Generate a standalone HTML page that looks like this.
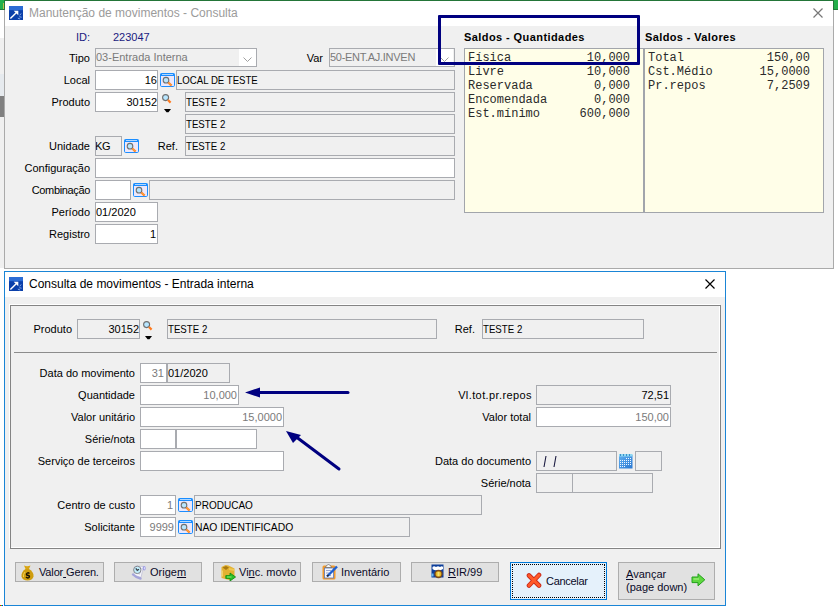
<!DOCTYPE html>
<html><head><meta charset="utf-8">
<style>
*{margin:0;padding:0;box-sizing:border-box}
html,body{width:838px;height:606px;overflow:hidden;background:#fff}
body{position:relative;font-family:"Liberation Sans",sans-serif;font-size:11px;color:#000}
.a{position:absolute}
.win{position:absolute;border:1px solid #aaa;background:#f0f0f0}
.tb{position:absolute;left:0;right:0;top:0;background:#fff}
.tt{position:absolute;font-size:12px;white-space:nowrap;line-height:16px}
.lb{position:absolute;white-space:nowrap;line-height:20px;height:20px;text-align:right}
.f{position:absolute;border:1px solid #a9abb0;background:#fff;height:20px;line-height:19px;white-space:nowrap;overflow:hidden;padding:0}
.d{background:#f0f0f0}
.rt{text-align:right;padding:0}
.g{color:#7a7a7a}
.mono{font-family:"Liberation Mono",monospace;font-size:12px;line-height:14px;white-space:pre;position:absolute;color:#2a2a2a}
.bold{font-weight:bold}
.uc{letter-spacing:-0.5px}
.lk{position:absolute;width:15px;height:15px}
.btn{position:absolute;border:1px solid #adadad;background:#e1e1e1;height:20px;line-height:18px;white-space:nowrap}
</style></head>
<body>
<svg width="0" height="0" style="position:absolute">
<defs>
<symbol id="lk" viewBox="0 0 15 14">
 <rect x="0.5" y="0.5" width="14" height="13" rx="1.2" fill="#ece8fb" stroke="#1b8dff"/>
 <rect x="0.5" y="0.5" width="14" height="2.5" fill="#1b8dff"/>
 <rect x="2" y="1" width="11" height="1" fill="#b0d8ff"/>
 <circle cx="6" cy="7.2" r="2.8" fill="#b8e6ff" stroke="#707070" stroke-width="1.1"/>
 <path d="M8.3 9.5 L11.6 12.6" stroke="#ff8326" stroke-width="2.2"/>
 <path d="M9.3 10.5 L10.3 11.5" stroke="#ffd040" stroke-width="1"/>
</symbol>
<symbol id="app" viewBox="0 0 15 15">
 <rect x="0" y="0" width="15" height="15" fill="#0b40aa"/>
 <rect x="0" y="0" width="15" height="4.5" fill="#2c6cd4"/>
 <path d="M1.5 13.5 L8.5 6.5" stroke="#fff" stroke-width="1.5"/>
 <path d="M5 5 L10 5 L10 10 Z" fill="#fff"/>
 <path d="M13 8 L11.5 10 M11 11.5 L13.5 12 M9.5 13 L12 14" stroke="#8fb0ea" stroke-width="1"/>
</symbol>
<symbol id="mg" viewBox="0 0 10 10">
 <circle cx="3.6" cy="3.6" r="3" fill="#b8e6ff" stroke="#6f6f6f" stroke-width="1.1"/>
 <path d="M6 6 L8.6 8.6" stroke="#ff7a1e" stroke-width="2.2"/>
</symbol>
</defs></svg>
<!-- background bits -->
<div class="a" style="left:0;top:0;width:838px;height:1px;background:#2a7a3c"></div>
<div class="a" style="left:0;top:0;width:4px;height:10px;background:#22b04b"></div>

<div class="a" style="left:0;top:38px;width:4px;height:230px;background:#f0f0f0"></div>
<div class="a" style="left:0;top:74px;width:4px;height:22px;background:#e6eaee"></div>
<div class="a" style="left:0;top:96px;width:4px;height:21px;background:#808080"></div>

<div class="a" style="left:0;top:605px;width:1px;height:1px;background:#f00"></div><div class="a" style="left:1px;top:605px;width:1px;height:1px;background:#0f0"></div><div class="a" style="left:2px;top:605px;width:1px;height:1px;background:#00f"></div>
<!-- TOP WINDOW -->
<div class="win" style="left:4px;top:0px;width:830px;height:269px;border-top-color:#237538">
  <div class="tb" style="height:25px"></div>
</div>
<div class="a" style="left:834px;top:0;width:4px;height:9px;background:#22ae4a"></div><div class="a" style="left:4px;top:0;width:1px;height:10px;background:#23753a"></div><div class="a" style="left:0;top:9px;width:4px;height:1px;background:#1f7a38"></div><div class="a" style="left:3px;top:3px;width:1px;height:6px;background:#b9c24a"></div><div class="a" style="left:834px;top:9px;width:4px;height:1px;background:#1f7a38"></div><div class="a" style="left:833px;top:0;width:1px;height:10px;background:#23753a"></div>
<svg class="a" style="left:9px;top:6px" width="14" height="14" viewBox="0 0 15 15"><use href="#app"/></svg>
<div class="tt" style="left:29px;top:5px;color:#9b9b9b">Manutenção de movimentos - Consulta</div>
<svg class="a" style="left:813px;top:8px" width="11" height="11" viewBox="0 0 11 11"><path d="M0.5 0.5 L9.5 9.5 M9.5 0.5 L0.5 9.5" stroke="#777" stroke-width="1.2"/></svg>

<div class="lb" style="left:76px;top:27px;color:#1a1a80;text-align:left">ID:</div>
<div class="lb" style="left:113px;top:27px;color:#1a1a80;text-align:left">223047</div>

<div class="lb" style="right:748px;top:48px">Tipo</div>
<div class="f d g" style="left:95px;top:48px;width:162px;height:19px;line-height:17px">03-Entrada Interna</div>
<div class="a" style="left:239px;top:49px;width:17px;height:17px;background:#fff"></div>
<svg class="a" style="left:243px;top:57px" width="9" height="5"><path d="M0.5 0.5 L4.5 4.5 L8.5 0.5" stroke="#a0a0a0" fill="none"/></svg>

<div class="lb" style="right:515px;top:48px">Var</div>
<div class="f d g" style="left:329px;top:48px;width:126px;height:19px;line-height:17px"><span style="letter-spacing:-0.28px">50-ENT.AJ.INVEN</span></div>
<div class="a" style="left:436px;top:49px;width:17px;height:17px;background:#fff"></div>
<svg class="a" style="left:440px;top:57px" width="9" height="5"><path d="M0.5 0.5 L4.5 4.5 L8.5 0.5" stroke="#a0a0a0" fill="none"/></svg>

<div class="lb" style="right:748px;top:70px">Local</div>
<div class="f rt" style="left:95px;top:70px;width:63px">16</div>
<div class="f d" style="left:176px;top:70px;width:279px"><span style="display:inline-block;transform:scaleX(0.875);transform-origin:0 0;margin-left:-0.5px">LOCAL DE TESTE</span></div>

<div class="lb" style="right:748px;top:92px">Produto</div>
<div class="f rt" style="left:95px;top:92px;width:63px">30152</div>
<div class="f d" style="left:185px;top:92px;width:270px"><span style="display:inline-block;transform:scaleX(0.88);transform-origin:0 0">TESTE 2</span></div>
<div class="f d" style="left:185px;top:114px;width:270px"><span style="display:inline-block;transform:scaleX(0.88);transform-origin:0 0">TESTE 2</span></div>

<div class="lb" style="right:748px;top:136px">Unidade</div>
<div class="f d" style="left:95px;top:136px;width:27px"><span style="margin-left:-1px;letter-spacing:-0.3px">KG</span></div>
<div class="lb" style="right:660px;top:136px">Ref.</div>
<div class="f d" style="left:185px;top:136px;width:270px"><span style="display:inline-block;transform:scaleX(0.88);transform-origin:0 0">TESTE 2</span></div>

<div class="lb" style="right:748px;top:158px">Configuração</div>
<div class="f" style="left:95px;top:158px;width:360px"></div>

<div class="lb" style="right:748px;top:180px;letter-spacing:-0.35px">Combinação</div>
<div class="f" style="left:95px;top:180px;width:36px"></div>
<div class="f d" style="left:149px;top:180px;width:306px"></div>

<div class="lb" style="right:748px;top:202px">Período</div>
<div class="f" style="left:95px;top:202px;width:63px">01/2020</div>

<div class="lb" style="right:748px;top:224px">Registro</div>
<div class="f rt" style="left:95px;top:224px;width:63px;padding-right:1px">1</div>


<svg class="a" style="left:160px;top:73px" width="15" height="14"><use href="#lk"/></svg>
<svg class="a" style="left:162px;top:94px" width="10" height="10"><use href="#mg"/></svg>
<svg class="a" style="left:164px;top:109px" width="7" height="4"><path d="M0 0 H7 L4.5 3.2 H2.5 Z" fill="#000"/></svg>
<svg class="a" style="left:124px;top:139px" width="15" height="14"><use href="#lk"/></svg>
<svg class="a" style="left:133px;top:183px" width="15" height="14"><use href="#lk"/></svg>
<div class="a bold" style="left:464px;top:31px;line-height:13px;white-space:nowrap;letter-spacing:0.42px">Saldos - Quantidades</div>
<div class="a bold" style="left:645px;top:31px;line-height:13px;white-space:nowrap;letter-spacing:0.38px">Saldos - Valores</div>
<div class="a" style="left:464px;top:48px;width:180px;height:165px;border:1px solid #a2a5ab;background:#fffee8"></div>
<div class="a" style="left:644px;top:48px;width:180px;height:165px;border:1px solid #a2a5ab;background:#fffee8"></div>
<div class="mono" style="left:468px;top:51px">Física
Livre
Reservada
Encomendada
Est.mínimo</div>
<div class="mono" style="right:208px;top:51px;text-align:right">10,000
10,000
0,000
0,000
600,000</div>
<div class="mono" style="left:648px;top:51px">Total
Cst.Médio
Pr.repos</div>
<div class="mono" style="right:28px;top:51px;text-align:right">150,00
15,0000
7,2509</div>

<!-- annotation rect -->
<div class="a" style="left:438px;top:15px;width:202px;height:50px;border:3px solid #000080;border-radius:1px"></div>

<!-- SECOND WINDOW -->
<div class="win" style="left:4px;top:271px;width:722px;height:335px;border-color:#1a85d6">
  <div class="tb" style="height:25px"></div>
</div>
<svg class="a" style="left:9px;top:277px" width="14" height="14" viewBox="0 0 15 15"><use href="#app"/></svg>
<div class="tt" style="left:29px;top:276px;color:#000">Consulta de movimentos - Entrada interna</div>
<svg class="a" style="left:705px;top:279px" width="11" height="11" viewBox="0 0 11 11"><path d="M0.5 0.5 L9.5 9.5 M9.5 0.5 L0.5 9.5" stroke="#000" stroke-width="1.2"/></svg>

<!-- group box -->
<div class="a" style="left:9px;top:304px;width:711px;height:244px;border:1px solid #fff"></div>
<div class="a" style="left:10px;top:305px;width:711px;height:244px;border:1px solid #848484"></div>
<div class="a" style="left:14px;top:352px;width:703px;height:1px;background:#8c8c8c"></div>

<div class="lb" style="right:766px;top:319px">Produto</div>
<div class="f d rt" style="left:77px;top:319px;width:63px">30152</div>
<div class="f d" style="left:167px;top:319px;width:270px"><span style="display:inline-block;transform:scaleX(0.88);transform-origin:0 0">TESTE 2</span></div>
<div class="lb" style="right:363px;top:319px">Ref.</div>
<div class="f d" style="left:482px;top:319px;width:162px"><span style="display:inline-block;transform:scaleX(0.88);transform-origin:0 0">TESTE 2</span></div>

<div class="lb" style="right:703px;top:363px">Data do movimento</div>
<div class="f rt g" style="left:140px;top:363px;width:27px;padding-right:2px">31</div>
<div class="f d" style="left:167px;top:363px;width:63px">01/2020</div>

<div class="lb" style="right:703px;top:385px">Quantidade</div>
<div class="f rt g" style="left:140px;top:385px;width:99px;padding-right:1px">10,000</div>
<div class="lb" style="right:703px;top:407px">Valor unitário</div>
<div class="f rt g" style="left:140px;top:407px;width:144px;padding-right:1px">15,0000</div>
<div class="lb" style="right:703px;top:429px">Série/nota</div>
<div class="f" style="left:140px;top:429px;width:36px"></div>
<div class="f" style="left:176px;top:429px;width:81px"></div>
<div class="lb" style="right:703px;top:451px">Serviço de terceiros</div>
<div class="f" style="left:140px;top:451px;width:144px"></div>

<div class="lb" style="right:703px;top:495px">Centro de custo</div>
<div class="f rt g" style="left:140px;top:495px;width:36px;padding-right:2px">1</div>
<div class="f d" style="left:194px;top:495px;width:288px"><span style="display:inline-block;transform:scaleX(0.91);transform-origin:0 0;margin-left:-0.5px">PRODUCAO</span></div>
<div class="lb" style="right:703px;top:517px">Solicitante</div>
<div class="f rt g" style="left:140px;top:517px;width:36px;padding-right:1px">9999</div>
<div class="f d" style="left:194px;top:517px;width:216px"><span style="display:inline-block;transform:scaleX(0.94);transform-origin:0 0;margin-left:-0.5px">NAO IDENTIFICADO</span></div>

<div class="lb" style="right:306px;top:385px;letter-spacing:0.4px">Vl.tot.pr.repos</div>
<div class="f d rt" style="left:536px;top:385px;width:135px;padding-right:1px">72,51</div>
<div class="lb" style="right:307px;top:407px">Valor total</div>
<div class="f rt g" style="left:536px;top:407px;width:135px;padding-right:1px">150,00</div>
<div class="lb" style="right:307px;top:451px">Data do documento</div>
<div class="f d" style="left:536px;top:451px;width:81px"></div>
<svg class="a" style="left:540px;top:454px" width="20" height="16"><path d="M6 2 L4 13 M16 2 L14 13" stroke="#1a1a40" stroke-width="1.1"/></svg>
<div class="f d" style="left:635px;top:451px;width:27px"></div>
<div class="lb" style="right:307px;top:473px">Série/nota</div>
<div class="f d" style="left:536px;top:473px;width:37px"></div>
<div class="f d" style="left:572px;top:473px;width:81px"></div>


<svg class="a" style="left:143px;top:321px" width="10" height="10"><use href="#mg"/></svg>
<svg class="a" style="left:145px;top:336px" width="7" height="4"><path d="M0 0 H7 L4.5 3.2 H2.5 Z" fill="#000"/></svg>
<svg class="a" style="left:178px;top:498px" width="15" height="14"><use href="#lk"/></svg>
<svg class="a" style="left:178px;top:520px" width="15" height="14"><use href="#lk"/></svg>
<svg class="a" style="left:619px;top:454px" width="15" height="15" viewBox="0 0 15 15">
 <defs><linearGradient id="cg" x1="0" y1="0" x2="1" y2="1"><stop offset="0" stop-color="#62b0f0"/><stop offset="1" stop-color="#2a78d2"/></linearGradient></defs>
 <rect x="0" y="1" width="13.5" height="13.5" fill="url(#cg)"/>
 <rect x="0" y="0" width="13.5" height="2.5" fill="#8ed8f4"/>
 <g fill="#3e90c8"><rect x="1" y="0" width="1" height="2"/><rect x="4" y="0" width="1" height="2"/><rect x="7" y="0" width="1" height="2"/><rect x="10" y="0" width="1" height="2"/></g>
 <g fill="#f0f8ff"><rect x="7" y="4" width="1" height="1"/><rect x="9" y="4" width="1" height="1"/><rect x="11" y="4" width="1" height="1"/><rect x="1" y="6" width="1" height="1"/><rect x="3" y="6" width="1" height="1"/><rect x="5" y="6" width="1" height="1"/><rect x="7" y="6" width="1" height="1"/><rect x="9" y="6" width="1" height="1"/><rect x="11" y="6" width="1" height="1"/><rect x="1" y="8" width="1" height="1"/><rect x="3" y="8" width="1" height="1"/><rect x="5" y="8" width="1" height="1"/><rect x="7" y="8" width="1" height="1"/><rect x="9" y="8" width="1" height="1"/><rect x="11" y="8" width="1" height="1"/><rect x="1" y="10" width="1" height="1"/><rect x="3" y="10" width="1" height="1"/><rect x="5" y="10" width="1" height="1"/><rect x="7" y="10" width="1" height="1"/><rect x="9" y="10" width="1" height="1"/><rect x="11" y="10" width="1" height="1"/><rect x="1" y="12" width="1" height="1"/><rect x="3" y="12" width="1" height="1"/><rect x="5" y="12" width="1" height="1"/></g>
</svg>
<!-- buttons -->
<div class="btn" style="left:15px;top:562px;width:89px"></div>
<div class="btn" style="left:114px;top:562px;width:88px"></div>
<div class="btn" style="left:213px;top:562px;width:88px"></div>
<div class="btn" style="left:312px;top:562px;width:89px"></div>
<div class="btn" style="left:411px;top:562px;width:88px"></div>
<div class="btn" style="left:510px;top:562px;width:97px;height:38px;border-color:#0078d7;background:#e5f1fb"></div>
<div class="btn" style="left:618px;top:562px;width:97px;height:38px"></div>


<svg class="a" style="left:20px;top:564px" width="15" height="17" viewBox="0 0 15 17">
 <path d="M4 1.5 Q7 3 10.5 1.5 L9 5 L5.5 5 Z" fill="#d9a514"/>
 <path d="M5.5 5 Q1 8 1.5 12.5 Q2.5 16.5 7.5 16.5 Q12.5 16.5 13.5 12.5 Q14 8 9 5 Z" fill="#cf9d0e"/>
 <path d="M5 8 Q3 10 3.5 13" stroke="#f2cf55" stroke-width="1" fill="none"/>
 <path d="M9.5 9.5 Q7.5 8 6.5 10 Q6.5 11.5 8.5 11.5 Q10 12 9 13.5 Q7.5 14.5 6 13" stroke="#1a1200" stroke-width="1.5" fill="none"/>
</svg>
<div class="a" style="left:39px;top:566px;line-height:13px;white-space:nowrap;color:#0a0a28;letter-spacing:-0.15px">Valor<span style="text-decoration:underline"> </span>Geren.</div>
<svg class="a" style="left:129px;top:562px" width="18" height="18" viewBox="0 0 18 18">
 <path d="M7 4 L14.5 4.5 L12 15.5 L4.5 13 Z" fill="#f6f6fb" stroke="#c0c0d8" stroke-width="0.8"/>
 <path d="M10 13 L12 9 M11 8 L13 6" stroke="#d8d8ec" stroke-width="1"/>
 <ellipse cx="15.2" cy="6.3" rx="1.5" ry="2.3" fill="#9d9de2"/>
 <ellipse cx="15.5" cy="6.2" rx="0.6" ry="1.3" fill="#d8d8ff"/>
 <path d="M4 12.5 Q7 15.5 11.5 16.5" stroke="#a4a4da" stroke-width="2.4" fill="none" stroke-linecap="round"/>
 <circle cx="8.3" cy="7.9" r="3.7" fill="#c2eefc" stroke="#85858c" stroke-width="1"/>
 <path d="M6.8 6.3 L8.3 8.3 L10 7.2" stroke="#3a4048" stroke-width="1.3" fill="none"/>
</svg>
<div class="a" style="left:150px;top:566px;line-height:13px;white-space:nowrap;color:#0a0a28">Orige<span style="text-decoration:underline">m</span></div>
<svg class="a" style="left:219px;top:562px" width="18" height="19" viewBox="0 0 18 19">
 <path d="M2.5 5 L6.5 3 L9.5 3.5 L12.5 5 L15.5 6.5 L15.5 15.5 L10 18 L2.5 16 Z" fill="#e3b232"/>
 <path d="M3.5 5.5 L7 4 L10 5.5 L7 8 Z" fill="#a87a12"/>
 <path d="M10 6 L15 7 L15 9 L10 8 Z" fill="#f0c850"/>
 <path d="M3.2 8.5 L3.2 14.5" stroke="#f7da78" stroke-width="1.2"/>
 <path d="M6.8 13.6 H11 V11 L16.6 15 L11 19 V16.4 H6.8 Z" fill="#2cbf2c" stroke="#0c8c0c" stroke-width="0.8"/>
 <path d="M8 15 H12.5" stroke="#8cf06c" stroke-width="1"/>
</svg>
<div class="a" style="left:239px;top:566px;line-height:13px;white-space:nowrap;color:#0a0a28">Vi<span style="text-decoration:underline">n</span>c. movto</div>
<svg class="a" style="left:322px;top:564px" width="16" height="16" viewBox="0 0 16 16">
 <rect x="0.5" y="1.5" width="13" height="14" rx="1.5" fill="#f39a2a"/>
 <rect x="2.5" y="4" width="9" height="10" fill="#f4f6fb" stroke="#5a78b8" stroke-width="0.8"/>
 <path d="M4.5 1.5 Q6.5 -0.5 8.5 1.5 L9.5 3.5 L3.5 3.5 Z" fill="#f8f8f8" stroke="#555" stroke-width="0.6"/>
 <path d="M4 6.5 H9 M4 9 H7 M4 11.5 H9" stroke="#9aa6d0" stroke-width="1"/>
 <path d="M5.5 12 L15 2.5" stroke="#1d5fd0" stroke-width="2.4"/>
 <path d="M5 12.5 L6.5 11" stroke="#222" stroke-width="1.5"/>
</svg>
<div class="a" style="left:341px;top:566px;line-height:13px;white-space:nowrap;color:#0a0a28">Inventário</div>
<svg class="a" style="left:431px;top:564px" width="13" height="15" viewBox="0 0 13 15">
 <rect x="0.5" y="0.5" width="12" height="13" fill="#0d3f9c"/>
 <path d="M1.5 3 Q3 1.5 5 3 Q7 1.5 9 3 Q11 1.5 12 3 L12 5 Q9 7 6.5 6 Q4 7 1.5 5 Z" fill="#fff"/>
 <rect x="0.5" y="9.5" width="2" height="3" fill="#6ab8ee"/>
 <circle cx="7.5" cy="10" r="4.2" fill="#7a4a20"/>
 <circle cx="7.5" cy="10" r="2.8" fill="#e6b820"/>
 <rect x="6.5" y="8" width="2" height="4" fill="#f6e070"/>
</svg>
<div class="a" style="left:448px;top:566px;line-height:13px;white-space:nowrap;color:#0a0a28"><span style="text-decoration:underline">R</span>IR/99</div>

<div class="a" style="left:512px;top:564px;width:93px;height:34px;border:1px dotted #000"></div>
<svg class="a" style="left:526px;top:572px" width="16" height="16" viewBox="0 0 16 16">
 <path d="M3 3.5 L13 13.5 M13 3 L3 13.5" stroke="#c8281a" stroke-width="4.6" stroke-linecap="round"/>
 <path d="M3 3.5 L13 13.5 M13 3 L3 13.5" stroke="#ff5a2a" stroke-width="3" stroke-linecap="round"/>
</svg>
<div class="a" style="left:546px;top:575px;line-height:13px;white-space:nowrap;color:#0a0a28;letter-spacing:-0.3px">Cancelar</div>

<div class="a" style="left:626px;top:568px;line-height:13px;white-space:nowrap;color:#0a0a28"><span style="text-decoration:underline">A</span>vançar<br>(page down)</div>
<svg class="a" style="left:691px;top:573px" width="15" height="14" viewBox="0 0 15 14">
 <path d="M1 4 L7 4 L7 0.8 L13.8 6.8 L7 12.8 L7 9.6 L1 9.6 Z" fill="#5fd840" stroke="#22a01a" stroke-width="1"/>
 <path d="M2.5 6 H8" stroke="#a6f080" stroke-width="1.2"/>
</svg>
<!-- arrows -->
<svg class="a" style="left:0;top:0" width="838" height="606">
  <path d="M259 392.5 L348 392.5" stroke="#000080" stroke-width="3" stroke-linecap="round"/>
  <path d="M245 392.5 L260 387.5 L260 397.5 Z" fill="#000080"/>
  <path d="M339 469 L295 436" stroke="#000080" stroke-width="3" stroke-linecap="round"/>
  <path d="M286 431 L301 435 L293 443 Z" fill="#000080"/>
</svg>
</body></html>
